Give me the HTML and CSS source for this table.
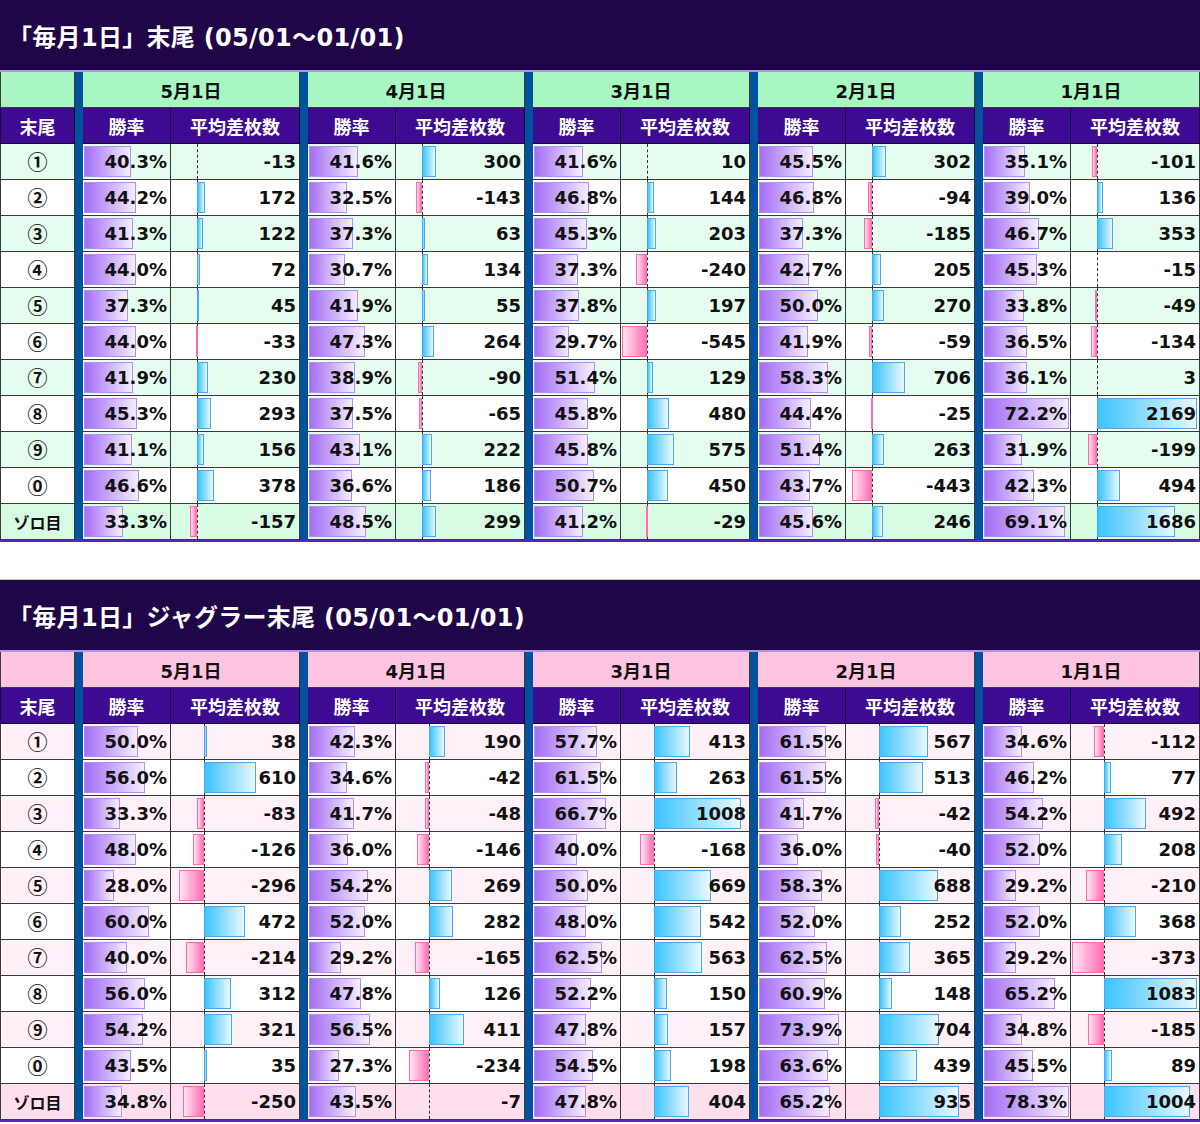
FILE: index.html
```html
<!DOCTYPE html>
<html lang="ja">
<head>
<meta charset="utf-8">
<title>毎月1日 末尾</title>
<link rel="stylesheet" href="styles.css">
</head>
<body>
<main class="page">
  <section class="board board-mint">
    <h2 class="board-title">「毎月1日」末尾 (05/01～01/01)</h2>
    <div class="grid" id="grid-all"></div>
  </section>
  <section class="board board-pink">
    <h2 class="board-title">「毎月1日」ジャグラー末尾 (05/01～01/01)</h2>
    <div class="grid" id="grid-juggler"></div>
  </section>
</main>
<script src="script.js"></script>
</body>
</html>
```
FILE: styles.css
```css
* { box-sizing: border-box; }

body {
  margin: 0;
  background: #ffffff;
  font-family: "DejaVu Sans", "Noto Sans CJK JP", sans-serif;
  color: #111111;
}

.page {
  width: 1200px;
}

.board-pink {
  margin-top: 37px;
  border-top: 1px solid #c8c8c8;
}

.board-title {
  margin: 0;
  height: 72px;
  padding-left: 8px;
  display: flex;
  align-items: center;
  background: #1f0649;
  border-bottom: 2px solid #b291e6;
  color: #ffffff;
  font-family: "DejaVu Sans", "Noto Sans CJK JP", sans-serif;
  font-weight: 700;
  font-size: 24px;
  letter-spacing: 0.3px;
}

.grid {
  border-bottom: 2px solid #5c22c4;
}

.row {
  display: grid;
  grid-template-columns: 75px repeat(5, 8px 88px 129px);
  height: 36px;
}

.cell {
  position: relative;
  display: flex;
  align-items: center;
  justify-content: flex-end;
  padding-right: 3px;
  border-right: 1px solid #3a3a3a;
  border-bottom: 1px solid #3a3a3a;
  font-weight: 700;
  font-size: 18px;
  white-space: nowrap;
}

.sep {
  background: #00529c;
}

.label {
  justify-content: center;
  padding-right: 0;
  border-left: 1px solid #3a3a3a;
  font-family: "Noto Sans CJK JP", sans-serif;
  font-size: 20px;
}

.label-zoro {
  font-size: 16px;
}

.date {
  grid-column: span 2;
  justify-content: center;
  padding-right: 0;
  font-size: 18px;
}

.row-heads .cell {
  justify-content: center;
  padding-right: 0;
  background: #3d0b91;
  color: #ffffff;
  border-color: #1a0638;
  font-family: "Noto Sans CJK JP", sans-serif;
  font-size: 18px;
}

.board-mint .row-dates .cell { background: #a8f7c2; }
.board-mint .row-odd { background: #e5fdee; }
.board-mint .row-zoro { background: #d7fbe3; }

.board-pink .row-dates .cell { background: #ffc4e0; }
.board-pink .row-odd { background: #fff1f7; }
.board-pink .row-zoro { background: #ffdeee; }

.row-even { background: #ffffff; }

.num {
  position: relative;
  z-index: 2;
}

.bar {
  position: absolute;
  top: 2px;
  bottom: 2px;
  z-index: 1;
}

.bar-pct {
  left: 1px;
  background: linear-gradient(to right, #a46ef5, #f4edff);
  border: 1px solid #b88cf5;
}

.bar-pos {
  background: linear-gradient(to right, #3cc4ff, #e8f8ff);
  border: 1px solid #4aa8f0;
}

.bar-neg {
  background: linear-gradient(to right, #ffe6f2, #ff6eb4);
  border: 1px solid #ff6aa8;
}

.axis {
  position: absolute;
  top: 0;
  bottom: 0;
  width: 0;
  border-left: 1px dashed #333333;
  z-index: 1;
}
```
FILE: script.js
```js
const LABELS = ['①', '②', '③', '④', '⑤', '⑥', '⑦', '⑧', '⑨', '⓪', 'ゾロ目'];
const DATES = ['5月1日', '4月1日', '3月1日', '2月1日', '1月1日'];

const ALL = [
  [[40.3,-13],[44.2,172],[41.3,122],[44.0,72],[37.3,45],[44.0,-33],[41.9,230],[45.3,293],[41.1,156],[46.6,378],[33.3,-157]],
  [[41.6,300],[32.5,-143],[37.3,63],[30.7,134],[41.9,55],[47.3,264],[38.9,-90],[37.5,-65],[43.1,222],[36.6,186],[48.5,299]],
  [[41.6,10],[46.8,144],[45.3,203],[37.3,-240],[37.8,197],[29.7,-545],[51.4,129],[45.8,480],[45.8,575],[50.7,450],[41.2,-29]],
  [[45.5,302],[46.8,-94],[37.3,-185],[42.7,205],[50.0,270],[41.9,-59],[58.3,706],[44.4,-25],[51.4,263],[43.7,-443],[45.6,246]],
  [[35.1,-101],[39.0,136],[46.7,353],[45.3,-15],[33.8,-49],[36.5,-134],[36.1,3],[72.2,2169],[31.9,-199],[42.3,494],[69.1,1686]]
];

const JUGGLER = [
  [[50.0,38],[56.0,610],[33.3,-83],[48.0,-126],[28.0,-296],[60.0,472],[40.0,-214],[56.0,312],[54.2,321],[43.5,35],[34.8,-250]],
  [[42.3,190],[34.6,-42],[41.7,-48],[36.0,-146],[54.2,269],[52.0,282],[29.2,-165],[47.8,126],[56.5,411],[27.3,-234],[43.5,-7]],
  [[57.7,413],[61.5,263],[66.7,1008],[40.0,-168],[50.0,669],[48.0,542],[62.5,563],[52.2,150],[47.8,157],[54.5,198],[47.8,404]],
  [[61.5,567],[61.5,513],[41.7,-42],[36.0,-40],[58.3,688],[52.0,252],[62.5,365],[60.9,148],[73.9,704],[63.6,439],[65.2,935]],
  [[34.6,-112],[46.2,77],[54.2,492],[52.0,208],[29.2,-210],[52.0,368],[29.2,-373],[65.2,1083],[34.8,-185],[45.5,89],[78.3,1004]]
];

function el(tag, cls, text) {
  const e = document.createElement(tag);
  if (cls) e.className = cls;
  if (text !== undefined) e.textContent = text;
  return e;
}

function build(grid, cols) {
  const all = cols.flat();
  const pmax = Math.max(...all.map(r => r[0]));
  const dmin = Math.min(0, ...all.map(r => r[1]));
  const dmax = Math.max(0, ...all.map(r => r[1]));
  const W = 125;
  const span = dmax - dmin;
  const axis = 1 + (-dmin) / span * W;

  const dates = el('div', 'row row-dates');
  dates.appendChild(el('div', 'cell label'));
  DATES.forEach(d => {
    dates.appendChild(el('div', 'sep'));
    dates.appendChild(el('div', 'cell date', d));
  });
  grid.appendChild(dates);

  const heads = el('div', 'row row-heads');
  heads.appendChild(el('div', 'cell label', '末尾'));
  DATES.forEach(() => {
    heads.appendChild(el('div', 'sep'));
    heads.appendChild(el('div', 'cell', '勝率'));
    heads.appendChild(el('div', 'cell', '平均差枚数'));
  });
  grid.appendChild(heads);

  LABELS.forEach((lab, i) => {
    let rc = i === 10 ? 'row-zoro' : (i % 2 === 0 ? 'row-odd' : 'row-even');
    const row = el('div', 'row row-data ' + rc);
    row.appendChild(el('div', 'cell label' + (i === 10 ? ' label-zoro' : ''), lab));
    cols.forEach(col => {
      const [p, d] = col[i];
      row.appendChild(el('div', 'sep'));

      const pc = el('div', 'cell pct');
      const pb = el('span', 'bar bar-pct');
      pb.style.width = (p / pmax * 85).toFixed(1) + 'px';
      pc.appendChild(pb);
      pc.appendChild(el('span', 'num', p.toFixed(1) + '%'));
      row.appendChild(pc);

      const dc = el('div', 'cell diff');
      const ax = el('span', 'axis');
      ax.style.left = axis.toFixed(1) + 'px';
      dc.appendChild(ax);
      const w = Math.abs(d) / span * W;
      if (w >= 1) {
        const db = el('span', 'bar ' + (d >= 0 ? 'bar-pos' : 'bar-neg'));
        db.style.width = w.toFixed(1) + 'px';
        db.style.left = (d >= 0 ? axis : axis - w).toFixed(1) + 'px';
        dc.appendChild(db);
      }
      dc.appendChild(el('span', 'num', String(d)));
      row.appendChild(dc);
    });
    grid.appendChild(row);
  });
}

build(document.getElementById('grid-all'), ALL);
build(document.getElementById('grid-juggler'), JUGGLER);
```
